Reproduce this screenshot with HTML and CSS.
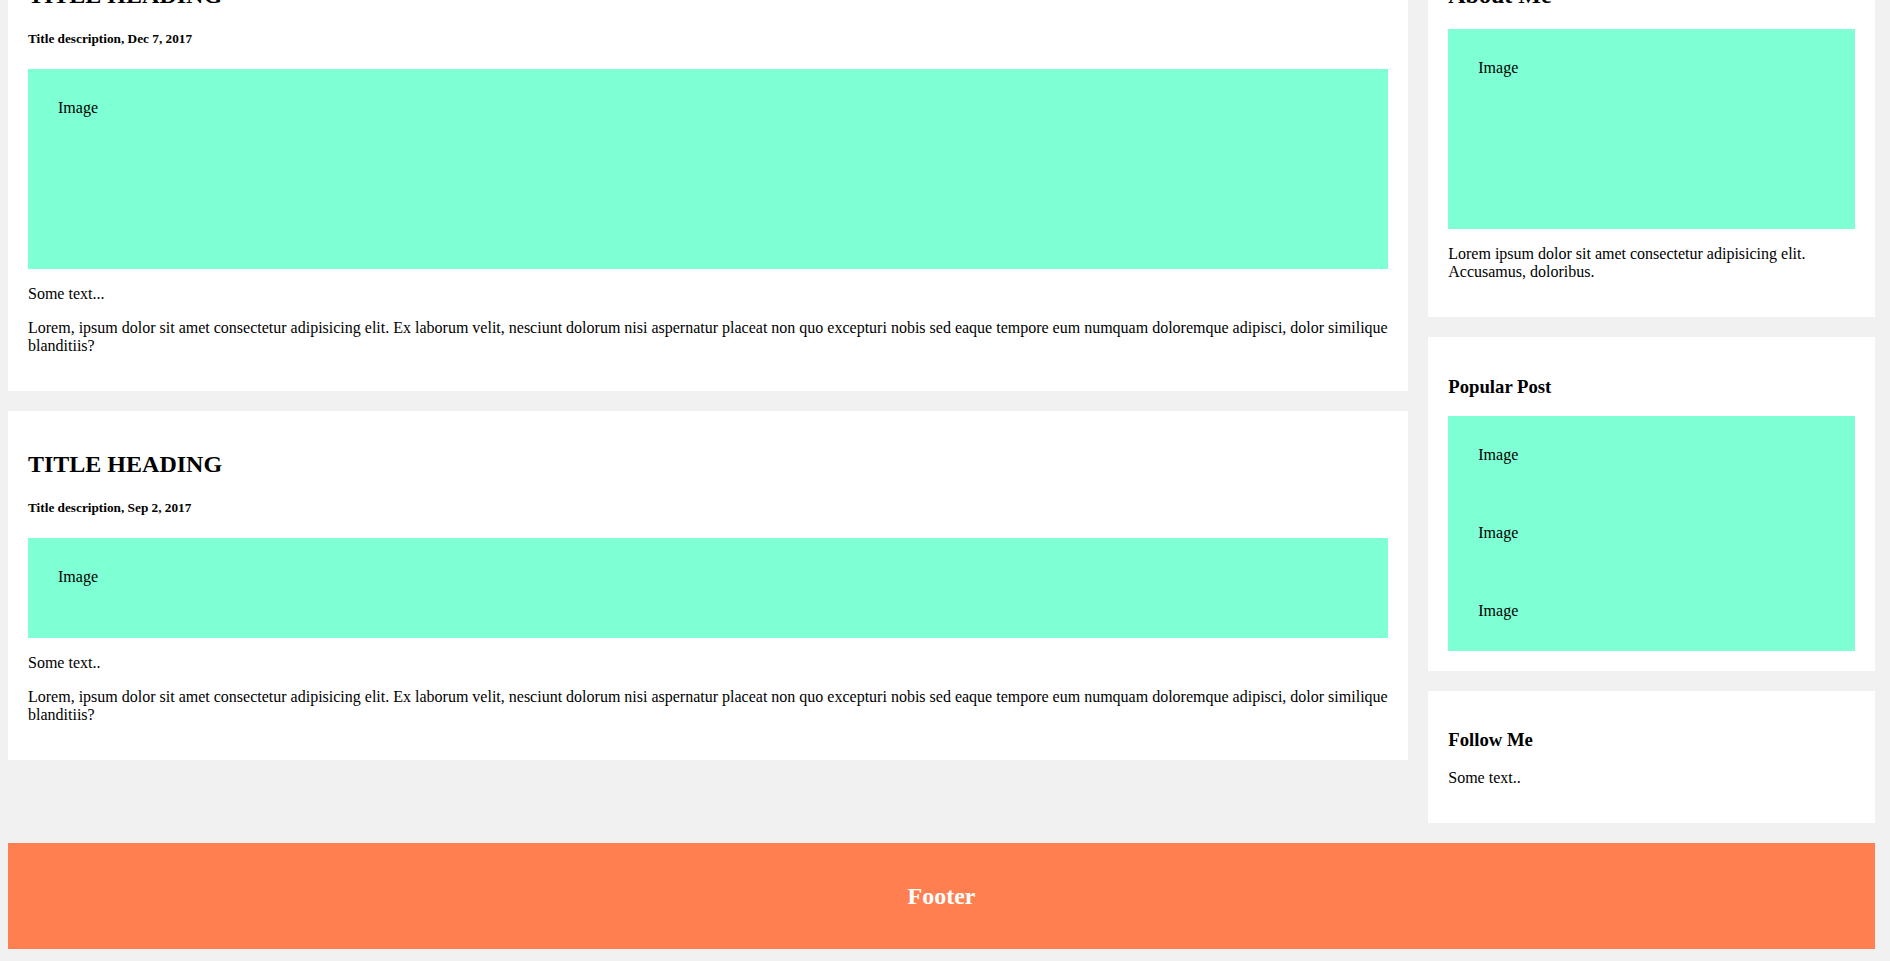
FILE: index.html
```html
<!DOCTYPE html>
<html>
<head>
<meta charset="utf-8">
<title>Blog</title>
<link rel="stylesheet" href="styles.css">
</head>
<body>
<div class="page">
  <div class="row">
    <div class="leftcolumn">
      <div class="card">
        <h2>TITLE HEADING</h2>
        <h5>Title description, Dec 7, 2017</h5>
        <div class="fakeimg tall">Image</div>
        <p>Some text...</p>
        <p>Lorem, ipsum dolor sit amet consectetur adipisicing elit. Ex laborum velit, nesciunt dolorum nisi aspernatur placeat non quo excepturi nobis sed eaque tempore eum numquam doloremque adipisci, dolor similique blanditiis?</p>
      </div>
      <div class="card">
        <h2>TITLE HEADING</h2>
        <h5>Title description, Sep 2, 2017</h5>
        <div class="fakeimg short">Image</div>
        <p>Some text..</p>
        <p>Lorem, ipsum dolor sit amet consectetur adipisicing elit. Ex laborum velit, nesciunt dolorum nisi aspernatur placeat non quo excepturi nobis sed eaque tempore eum numquam doloremque adipisci, dolor similique blanditiis?</p>
      </div>
    </div>
    <div class="rightcolumn">
      <div class="card">
        <h2>About Me</h2>
        <div class="fakeimg tall">Image</div>
        <p>Lorem ipsum dolor sit amet consectetur adipisicing elit. Accusamus, doloribus.</p>
      </div>
      <div class="card">
        <h3>Popular Post</h3>
        <div class="fakeimg">Image</div>
        <div class="fakeimg">Image</div>
        <div class="fakeimg">Image</div>
      </div>
      <div class="card">
        <h3>Follow Me</h3>
        <p>Some text..</p>
      </div>
    </div>
  </div>
  <div class="footer">
    <h2>Footer</h2>
  </div>
</div>
</body>
</html>
```
FILE: styles.css
```css
* {
  box-sizing: border-box;
}

html, body {
  margin: 0;
  padding: 0;
  background-color: #f1f1f1;
  font-family: "Liberation Serif", "Times New Roman", serif;
  font-size: 16px;
  line-height: 1.135;
  color: #000;
}

.page {
  padding: 0 15px 10px 8px;
}

.row {
  display: flex;
  align-items: flex-start;
  margin-top: -78px;
}

.leftcolumn {
  width: 75%;
}

.rightcolumn {
  width: 25%;
  padding-left: 20px;
}

.card {
  background-color: #fff;
  padding: 20px;
  margin-top: 20px;
}

.card h2 {
  font-size: 24px;
  margin: 19.92px 0;
}

.card h3 {
  font-size: 18.72px;
  margin: 18.72px 0;
}

.card h5 {
  font-size: 13.28px;
  margin: 22.18px 0;
}

.card p {
  margin: 16px 0;
}

.fakeimg {
  background-color: #7fffd4;
  width: 100%;
  padding: 30px;
}

.fakeimg.tall {
  height: 200px;
}

.fakeimg.short {
  height: 100px;
}

.footer {
  margin-top: 20px;
  padding: 20px;
  background-color: #ff7f50;
  text-align: center;
  color: #fff;
}

.footer h2 {
  font-size: 24px;
  margin: 19.3px 0;
}
```
